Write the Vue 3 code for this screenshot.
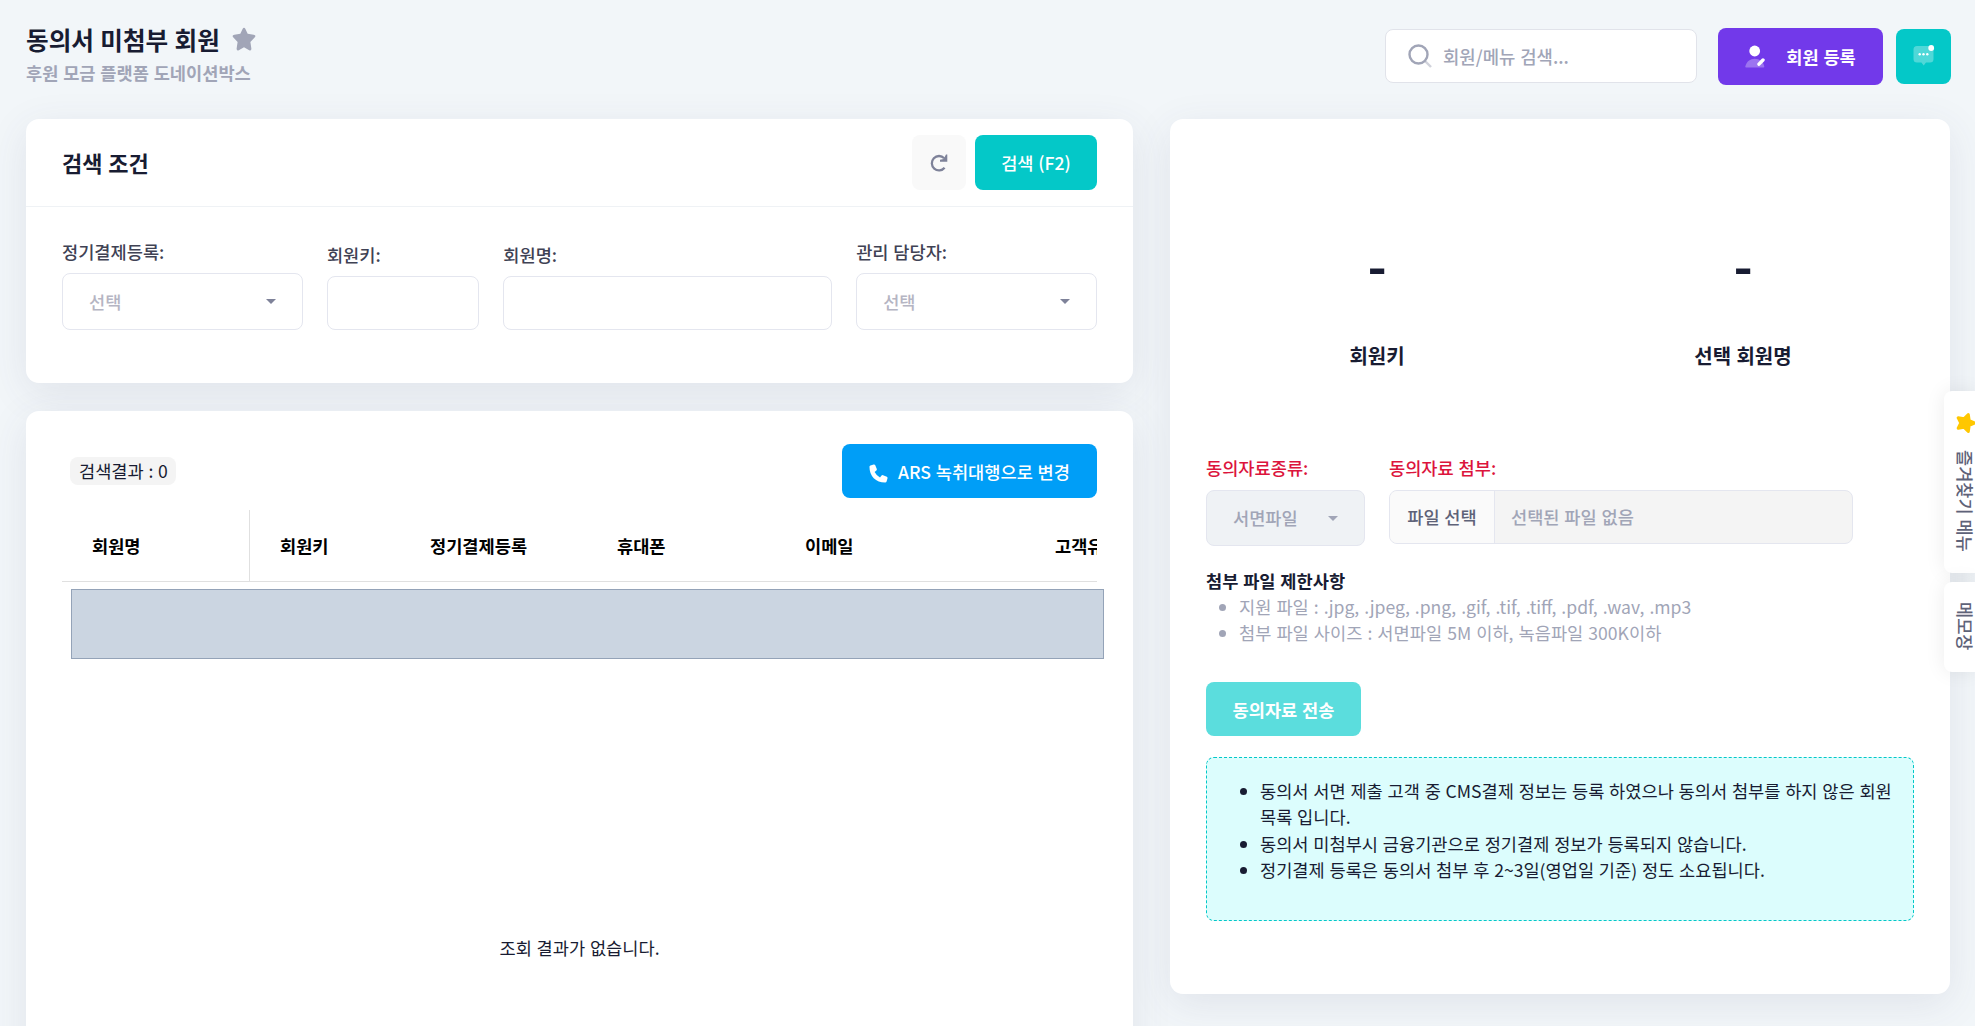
<script setup>
import { ref } from "vue";

// Search form
const memberKey = ref("");
const memberName = ref("");
const keyword = ref("");

// Result table
const total = ref(0);
const columns = [
  { label: "회원명", width: 188 },
  { label: "회원키", width: 150 },
  { label: "정기결제등록", width: 187 },
  { label: "휴대폰", width: 188 },
  { label: "이메일", width: 250 },
  { label: "고객유형", width: 188 },
];

const fileRules = [
  "지원 파일 : .jpg, .jpeg, .png, .gif, .tif, .tiff, .pdf, .wav, .mp3",
  "첨부 파일 사이즈 : 서면파일 5M 이하, 녹음파일 300K이하",
];

const notices = [
  "동의서 서면 제출 고객 중 CMS결제 정보는 등록 하였으나 동의서 첨부를 하지 않은 회원 목록 입니다.",
  "동의서 미첨부시 금융기관으로 정기결제 정보가 등록되지 않습니다.",
  "정기결제 등록은 동의서 첨부 후 2~3일(영업일 기준) 정도 소요됩니다.",
];
</script>

<template>
  <div class="page">
    <header class="toolbar">
      <div class="page-title">
        <h1>
          동의서 미첨부 회원
          <svg class="title-star" viewBox="0 0 24 24">
            <path d="M12 1.500Q12.700 1.500 13.200 2.600L15.400 7.200 20.900 8.100Q23.600 8.700 21.800 10.700L17.900 14.800 18.800 20.800Q18.900 23.200 16.800 22.300L12 19.700 7.200 22.300Q5.100 23.200 5.200 20.800L6.100 14.800 2.200 10.700Q0.400 8.700 3.100 8.100L8.600 7.200 10.800 2.600Q11.300 1.500 12 1.500Z" />
          </svg>
        </h1>
        <p>후원 모금 플랫폼 도네이션박스</p>
      </div>

      <div class="toolbar-actions">
        <div class="quick-search">
          <svg viewBox="0 0 24 24">
            <path d="M17.500 17.500 23 23" stroke-opacity="0.5" />
            <circle cx="10.500" cy="10.500" r="9" />
          </svg>
          <input v-model="keyword" placeholder="회원/메뉴 검색..." />
        </div>
        <button type="button" class="btn btn-register">
          <svg viewBox="0 0 20 24">
            <path d="M0.300 21.400C1.600 16.500 5 13.700 9.700 13.700S18.300 16.500 19.300 21.400Q19.400 22.400 18.400 22.400H1.200Q0.100 22.400 0.300 21.400Z" opacity="0.3" />
            <circle cx="9.700" cy="6" r="5.400" />
            <path d="M14 19.200 18 15" stroke="currentColor" stroke-width="3.400" stroke-linecap="round" />
          </svg>
          회원 등록
        </button>
        <button type="button" class="btn btn-chat">
          <svg viewBox="0 0 22 22">
            <path d="M4 2H17Q20.500 2 20.500 5.500V15Q20.500 18.500 17 18.500H13L10.700 21.500 8.400 18.500H4Q0.500 18.500 0.500 15V5.500Q0.500 2 4 2Z" opacity="0.3" />
            <circle cx="6.700" cy="10.300" r="1.200" />
            <circle cx="10.500" cy="10.300" r="1.200" />
            <circle cx="14.300" cy="10.300" r="1.200" />
            <circle cx="18.200" cy="4" r="2.900" />
          </svg>
        </button>
      </div>
    </header>

    <main class="content">
      <div class="left-column">
        <!-- Search conditions -->
        <section class="card">
          <div class="card-header">
            <h2>검색 조건</h2>
            <div class="card-actions">
              <button type="button" class="btn btn-reset">
                <svg viewBox="0 0 18 18">
                  <path d="M14.600 13.800A7.200 7.200 0 1 1 14.200 4.200" fill="none" stroke="currentColor" stroke-width="2.300" />
                  <path d="M17.300 0.600V7.800H10V5.700L13.600 5 16 0.600Z" />
                </svg>
              </button>
              <button type="button" class="btn btn-search">검색 (F2)</button>
            </div>
          </div>
          <div class="search-form">
            <div class="field col-3">
              <label>정기결제등록:</label>
              <div class="select">
                <span>선택</span>
                <i class="caret"></i>
              </div>
            </div>
            <div class="field col-2">
              <label for="memberKey">회원키:</label>
              <input id="memberKey" v-model="memberKey" class="input" />
            </div>
            <div class="field col-4">
              <label for="memberName">회원명:</label>
              <input id="memberName" v-model="memberName" class="input" />
            </div>
            <div class="field col-3">
              <label>관리 담당자:</label>
              <div class="select">
                <span>선택</span>
                <i class="caret"></i>
              </div>
            </div>
          </div>
        </section>

        <!-- Search results -->
        <section class="card result-card">
          <div class="result-header">
            <span class="badge">검색결과 : {{ total }}</span>
            <button type="button" class="btn btn-ars">
              <svg viewBox="0 0 20 20">
                <path d="M1.500 1.600 4.900 0.500Q6 0.200 6.600 1.200L8.200 5.200Q8.500 6.100 7.800 6.800L5.900 8.400Q7.800 12.200 11.600 14.100L13.200 12.200Q13.900 11.500 14.800 11.800L18.800 13.400Q19.800 14 19.500 15.100L18.500 18.500Q18.200 19.500 17 19.500 9.500 19.500 5 15T0.500 3Q0.500 1.800 1.500 1.600Z" />
              </svg>
              ARS 녹취대행으로 변경
            </button>
          </div>
          <div class="table-head">
            <div
              v-for="column in columns"
              :key="column.label"
              class="th"
              :style="{ width: column.width + 'px' }">
              {{ column.label }}
            </div>
          </div>
          <div class="row-placeholder"></div>
          <p class="empty">조회 결과가 없습니다.</p>
        </section>
      </div>

      <!-- Consent upload -->
      <section class="card consent-card">
        <div class="summary">
          <div class="summary-item">
            <strong>-</strong>
            <span>회원키</span>
          </div>
          <div class="summary-item">
            <strong>-</strong>
            <span>선택 회원명</span>
          </div>
        </div>

        <div class="upload-form">
          <div class="upload-type">
            <label>동의자료종류:</label>
            <div class="select disabled">
              <span>서면파일</span>
              <i class="caret"></i>
            </div>
          </div>
          <div class="upload-file">
            <label>동의자료 첨부:</label>
            <div class="file-input">
              <span class="file-button">파일 선택</span>
              <span class="file-name">선택된 파일 없음</span>
            </div>
          </div>
        </div>

        <div class="file-rules">
          <strong>첨부 파일 제한사항</strong>
          <ul>
            <li v-for="rule in fileRules" :key="rule">{{ rule }}</li>
          </ul>
        </div>

        <button type="button" class="btn btn-send" disabled>동의자료 전송</button>

        <div class="notice">
          <ul>
            <li v-for="notice in notices" :key="notice">{{ notice }}</li>
          </ul>
        </div>
      </section>
    </main>

    <!-- Side tabs -->
    <aside class="side-tabs">
      <div class="side-tab tab-favorite">
        <svg viewBox="0 0 24 24">
          <path d="M12 3.500 14.500 8.800 20.500 9.700 16.200 14 17.200 19.800 12 17.200 6.800 19.800 7.800 14 3.500 9.700 9.500 8.800Z" />
        </svg>
        <span>즐겨찾기 메뉴</span>
      </div>
      <div class="side-tab tab-memo">
        <span>메모장</span>
      </div>
    </aside>
  </div>
</template>

<style>
body {
  margin: 0;
  overflow: hidden;
  background-color: #f2f6f9;
}
</style>

<style scoped>
* {
  box-sizing: border-box;
}

.page {
  position: relative;
  width: 100%;
  height: 100vh;
  padding: 0 25px 0 26px;
  overflow: hidden;
  font-family: "Noto Sans CJK KR", "Noto Sans", sans-serif;
  font-size: 17.6px;
  line-height: 1.5;
  word-spacing: 0.8px;
  color: #181c32;
}

h1,
h2,
p,
ul {
  margin: 0;
}

input,
button {
  font-family: inherit;
  font-size: inherit;
  word-spacing: inherit;
}

/* Toolbar */
.toolbar {
  display: flex;
  justify-content: space-between;
  height: 119px;
}

.page-title {
  padding-top: 20px;
}

.page-title h1 {
  display: flex;
  align-items: center;
  height: 38px;
  font-size: 24.6px;
  font-weight: 600;
}

.page-title p {
  height: 30px;
  line-height: 30px;
  font-weight: 600;
  color: #a1a5b7;
}

.title-star {
  width: 26px;
  height: 26px;
  margin-left: 11px;
  fill: #a1a5b7;
}

.toolbar-actions {
  display: flex;
  align-items: center;
  height: 57px;
  margin: 28px -1px 0 0;
}

.quick-search {
  display: flex;
  align-items: center;
  width: 312px;
  height: 54px;
  margin: 0 21px 1px 0;
  padding-left: 22px;
  background-color: #fff;
  border: 1px solid #e1e3ea;
  border-radius: 8px;
}

.quick-search svg {
  width: 24px;
  height: 24px;
  fill: none;
  stroke: #a1a5b7;
  stroke-width: 2.4;
  overflow: visible;
}

.quick-search input {
  width: 220px;
  margin-left: 11px;
  padding: 0;
  border: none;
  outline: none;
  background: none;
  font-size: 17.8px;
  font-weight: 500;
}

.quick-search input::placeholder {
  color: #a1a5b7;
}

.btn {
  display: flex;
  align-items: center;
  justify-content: center;
  padding: 0;
  border: none;
  border-radius: 8px;
  font-weight: 500;
  color: #fff;
  cursor: pointer;
}

.btn svg {
  fill: currentColor;
}

.btn-register {
  width: 165px;
  height: 57px;
  margin-right: 13px;
  font-weight: 600;
  background-color: #7239ea;
}

.btn-register svg {
  width: 20px;
  height: 24px;
  margin-right: 21px;
}

.btn-chat {
  width: 55px;
  height: 55px;
  padding-bottom: 3px;
  background-color: #04c8c8;
}

.btn-chat svg {
  width: 22px;
  height: 22px;
}

/* Cards */
.content {
  display: flex;
  justify-content: space-between;
  align-items: flex-start;
}

.left-column {
  width: 1107px;
}

.card {
  background-color: #fff;
  border-radius: 13px;
  box-shadow: 0 10px 40px rgba(70, 70, 110, 0.1);
}

.card-header {
  display: flex;
  align-items: center;
  justify-content: space-between;
  height: 88px;
  padding: 0 36px;
  border-bottom: 1px solid #eff2f5;
}

.card-header h2 {
  font-size: 22px;
  font-weight: 600;
}

.card-actions {
  display: flex;
  gap: 9px;
}

.btn-reset {
  width: 54px;
  height: 55px;
  color: #7e8299;
  background-color: #f9f9f9;
}

.btn-reset svg {
  width: 18px;
  height: 18px;
}

.btn-search {
  width: 122px;
  height: 55px;
  background-color: #04c8c8;
}

.search-form {
  display: flex;
  align-items: flex-end;
  gap: 24px;
  height: 176px;
  padding: 0 36px 53px;
}

.field label,
.upload-form label {
  display: block;
  margin-bottom: 8px;
  line-height: 26px;
  font-weight: 500;
}

.field label {
  color: #3f4254;
}

.col-2 {
  width: 152.5px;
}

.col-3 {
  width: 241px;
}

.col-4 {
  width: 329px;
}

.input {
  display: block;
  width: 100%;
  height: 54px;
  padding: 0 16px;
  border: 1px solid #e4e6ef;
  border-radius: 8px;
  outline: none;
}

.select {
  display: flex;
  align-items: center;
  justify-content: space-between;
  height: 57px;
  padding: 1px 26px 0;
  border: 1px solid #e4e6ef;
  border-radius: 8px;
  font-weight: 500;
  color: #b5b5c3;
}

.caret {
  margin-top: -1px;
  border: 5px solid transparent;
  border-top-color: #7e8299;
  border-bottom: none;
}

/* Results */
.result-card {
  height: 700px;
  margin-top: 28px;
  padding: 33px 36px 0;
}

.result-header {
  display: flex;
  align-items: center;
  justify-content: space-between;
  height: 54px;
  padding-left: 8px;
}

.badge {
  padding: 0 8px 0 9px;
  border-radius: 8px;
  line-height: 28px;
  background-color: #f4f4f4;
}

.btn-ars {
  width: 255px;
  height: 54px;
  background-color: #009ef7;
}

.btn-ars svg {
  width: 19px;
  height: 19px;
  margin: 4px 10px 0 0;
}

.table-head {
  display: flex;
  height: 72px;
  margin-top: 12px;
  overflow: hidden;
  border-bottom: 1px solid #e0e0e0;
}

.th {
  flex: none;
  padding-left: 30px;
  line-height: 72px;
  font-weight: 700;
  color: #000;
}

.th:first-child {
  border-right: 1px solid #e0e0e0;
}

.row-placeholder {
  height: 70px;
  margin: 7px -7px 0 9px;
  background-color: #cbd5e1;
  border: 1px solid #94a3b8;
}

.empty {
  margin-top: 276px;
  text-align: center;
}

/* Consent card */
.consent-card {
  width: 780px;
  height: 875px;
  padding: 128px 36px 0;
}

.summary {
  display: flex;
  margin: 0 -12px;
}

.summary-item {
  display: flex;
  flex: 1;
  flex-direction: column;
  align-items: center;
}

.summary-item strong {
  height: 92px;
  font-size: 52px;
  font-weight: 700;
  line-height: 34px;
}

.summary-item span {
  font-size: 20px;
  font-weight: 600;
  line-height: 34px;
}

.upload-form {
  display: flex;
  gap: 24px;
  margin-top: 82px;
}

.upload-form label {
  margin-bottom: 9px;
  color: #dc143c;
}

.upload-type {
  width: 159px;
}

.upload-file {
  width: 464px;
}

.select.disabled {
  height: 56px;
  background-color: #eff2f5;
  color: #a1a5b7;
}

.select.disabled .caret {
  border-top-color: #a1a5b7;
}

.file-input {
  display: flex;
  height: 54px;
  overflow: hidden;
  line-height: 52px;
  font-weight: 500;
  background-color: #f4f4f4;
  border: 1px solid #e4e6ef;
  border-radius: 8px;
}

.file-button {
  width: 105px;
  text-align: center;
  color: #5e6278;
  background-color: #fafafa;
  border-right: 1px solid #e4e6ef;
}

.file-name {
  padding-left: 16px;
  color: #a1a5b7;
}

.file-rules {
  margin-top: 22px;
}

.file-rules strong {
  display: block;
  font-weight: 600;
  line-height: 26px;
}

.file-rules ul {
  padding-left: 33px;
  line-height: 26px;
  word-spacing: 1.1px;
  color: #a1a5b7;
}

.btn-send {
  width: 155px;
  height: 54px;
  margin-top: 36px;
  font-weight: 600;
  background-color: #5bdddd;
}

.notice {
  height: 164px;
  margin-top: 21px;
  padding: 20px 16px;
  background-color: #dcfdfd;
  border: 1px dashed #04c8c8;
  border-radius: 8px;
}

.notice ul {
  padding-left: 37px;
  line-height: 26.4px;
}

/* Tabs pinned to the right edge */
.side-tabs {
  position: absolute;
  top: 391px;
  right: 0;
  display: flex;
  flex-direction: column;
  gap: 9px;
}

.side-tab {
  display: flex;
  flex-direction: column;
  align-items: center;
  width: 31px;
  padding-left: 12px;
  background-color: #fff;
  border-radius: 8px 0 0 8px;
  box-shadow: 0 0 20px rgba(0, 0, 0, 0.08);
  font-weight: 500;
  color: #5e6278;
}

.side-tab span {
  writing-mode: vertical-rl;
  text-orientation: sideways;
  line-height: 19px;
  white-space: nowrap;
}

.side-tab svg {
  width: 24px;
  height: 24px;
  flex: none;
  margin-bottom: 15px;
  transform: rotate(90deg);
  fill: #ffc700;
  stroke: #ffc700;
  stroke-width: 3;
  stroke-linejoin: round;
}

.tab-favorite {
  height: 182px;
  padding-top: 20px;
}

.tab-memo {
  height: 90px;
  padding-top: 20px;
}
</style>
